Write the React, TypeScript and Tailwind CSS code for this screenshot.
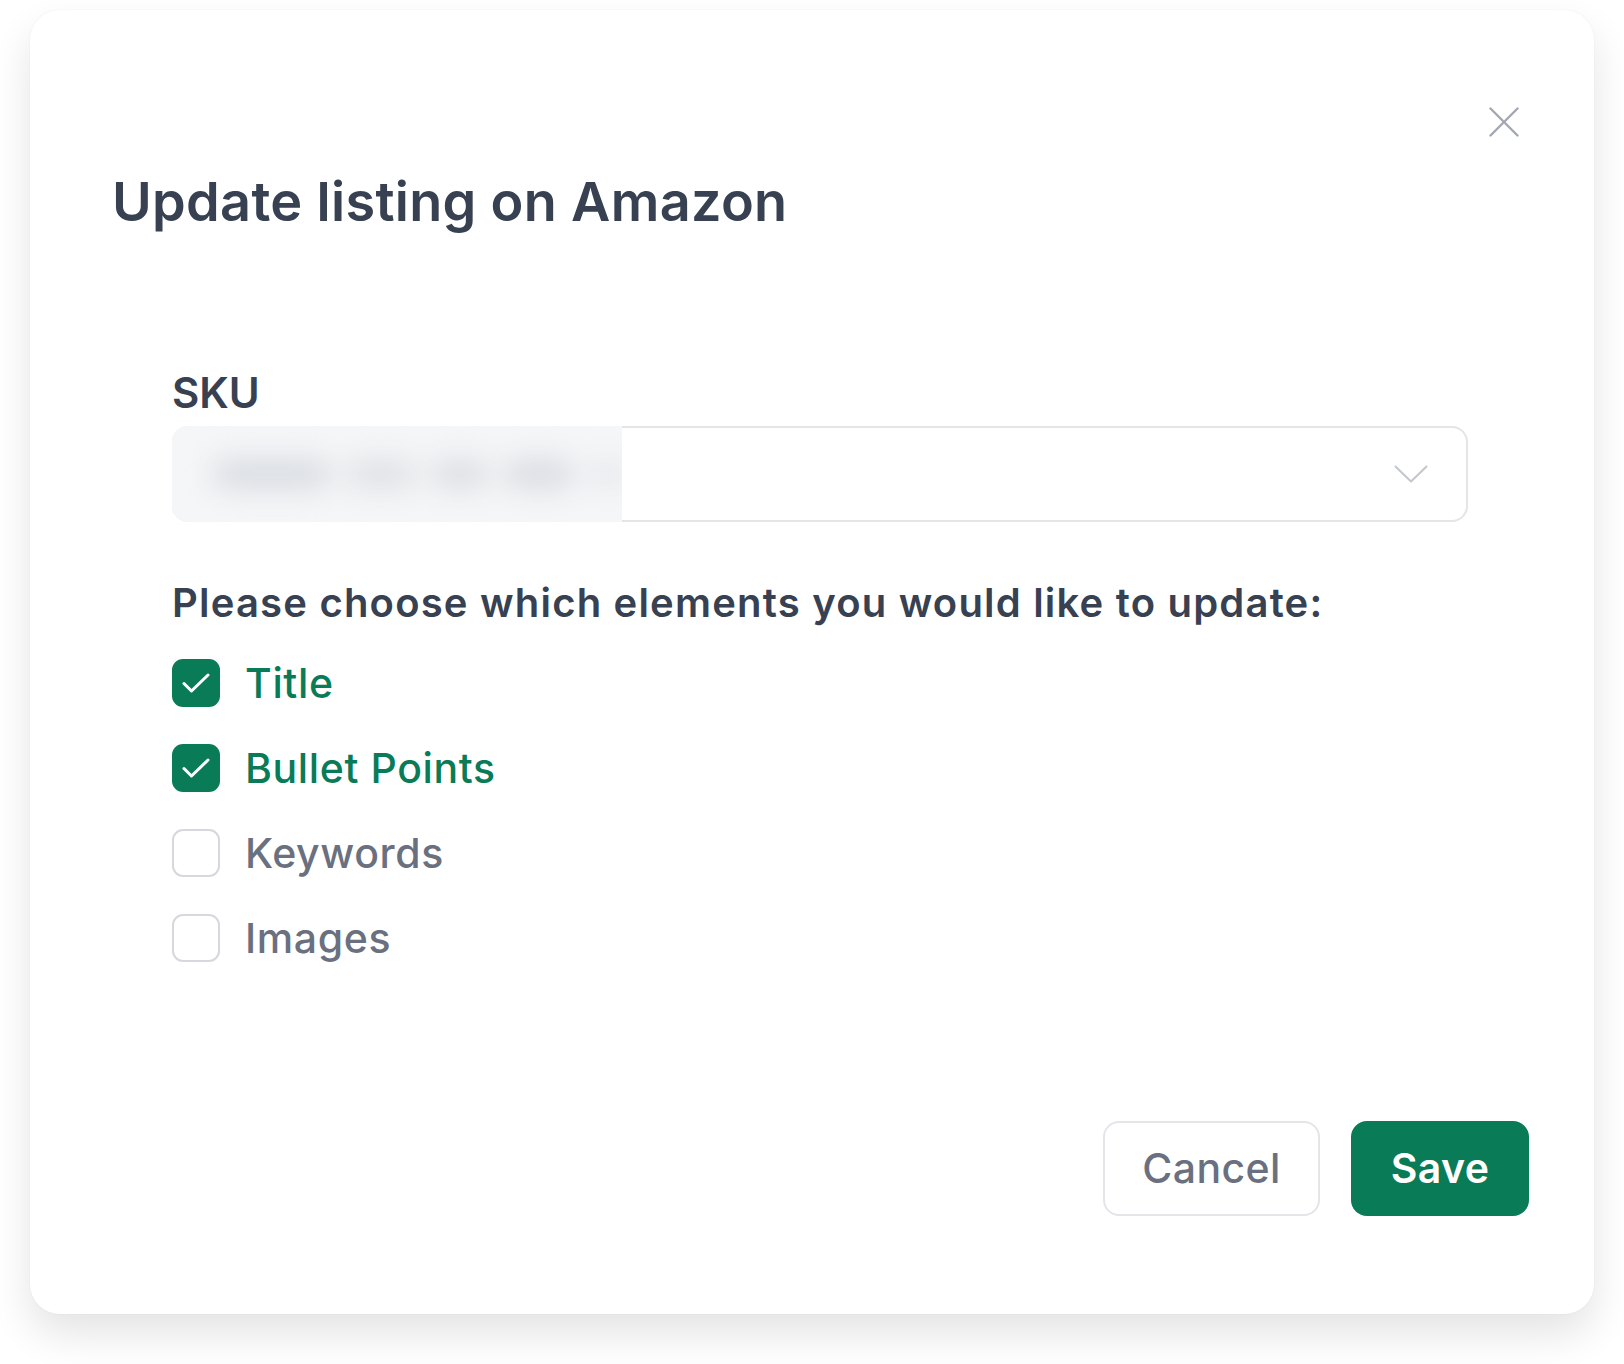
import { useState } from "react";

const GREEN = "#0a7b57";

interface Option {
  id: string;
  label: string;
}

const options: Option[] = [
  { id: "title", label: "Title" },
  { id: "bullets", label: "Bullet Points" },
  { id: "keywords", label: "Keywords" },
  { id: "images", label: "Images" },
];

function CheckRow({
  label,
  checked,
  onToggle,
}: {
  label: string;
  checked: boolean;
  onToggle: () => void;
}) {
  return (
    <button type="button" onClick={onToggle} className="flex h-[48px] items-center gap-[25px] text-left">
      {checked ? (
        <span className="flex h-[48px] w-[48px] items-center justify-center rounded-[11px] bg-[#0a7b57]">
          <svg width="28" height="20" viewBox="0 0 28 20" fill="none">
            <path d="M2 10.5 9.5 18 26 2" stroke="white" strokeWidth="3" strokeLinecap="round" strokeLinejoin="round" />
          </svg>
        </span>
      ) : (
        <span className="h-[48px] w-[48px] rounded-[11px] border-2 border-[#d6d8dd] bg-white" />
      )}
      <span
        className={`text-[41px] leading-[48px] font-medium tracking-[0.015em] ${checked ? "text-[#0a7b57]" : "text-[#6b7080]"}`}
      >
        {label}
      </span>
    </button>
  );
}

export default function App() {
  const [selected, setSelected] = useState<Record<string, boolean>>({
    title: true,
    bullets: true,
    keywords: false,
    images: false,
  });

  const toggle = (id: string) => setSelected((s) => ({ ...s, [id]: !s[id] }));

  return (
    <div className="min-h-screen bg-white pt-[10px] pl-[30px] font-['Inter','Liberation_Sans',sans-serif]">
      <div className="w-[1564px] rounded-[30px] bg-white pt-[97px] pb-[98px] pl-[82px] pr-[65px] shadow-[0_20px_40px_rgba(0,0,0,0.11),0_0_2px_rgba(0,0,0,0.06)]">
        {/* close */}
        <div className="flex h-[30px] justify-end pr-[10px]">
          <button type="button" className="h-[30px] w-[30px]">
            <svg width="30" height="30" viewBox="0 0 30 30" fill="none">
              <path d="M1.5 1.5 28.5 28.5M28.5 1.5 1.5 28.5" stroke="#a3a8b1" strokeWidth="2.4" strokeLinecap="round" />
            </svg>
          </button>
        </div>

        <h1 className="mt-[33px] text-[54px] leading-[64px] font-semibold tracking-[0.006em] text-[#374151]">
          Update listing on Amazon
        </h1>

        <div className="ml-[60px] mr-[61px]">
          <label className="mt-[135px] block text-[42px] leading-[48px] font-semibold text-[#374151]">SKU</label>

          <div className="relative mt-[9px] flex h-[96px] items-center justify-end rounded-[16px] border-2 border-[#e3e5e9] bg-white pr-[38px]">
            {/* redacted value */}
            <div className="absolute -top-[2px] -bottom-[2px] -left-[2px] flex w-[450px] items-center overflow-hidden rounded-l-[16px] bg-[#f5f6f8] pl-[40px]">
              <div className="flex items-center gap-[14px] blur-[14px]">
                <span className="h-[30px] w-[120px] rounded-full bg-[#d9dce1]" />
                <span className="h-[30px] w-[70px] rounded-full bg-[#dfe1e5]" />
                <span className="h-[30px] w-[60px] rounded-full bg-[#dcdfe3]" />
                <span className="h-[30px] w-[70px] rounded-full bg-[#d9dce1]" />
                <span className="h-[22px] w-[40px] rounded-full bg-[#e4e6ea]" />
              </div>
            </div>
            <svg width="34" height="18" viewBox="0 0 34 18" fill="none">
              <path d="M1.5 1.5 17 16.5 32.5 1.5" stroke="#c3c6cc" strokeWidth="2" strokeLinecap="round" strokeLinejoin="round" />
            </svg>
          </div>

          <p className="mt-[57px] text-[40px] leading-[48px] font-semibold tracking-[0.03em] text-[#374151]">
            Please choose which elements you would like to update:
          </p>

          <div className="mt-[32px] flex flex-col items-start gap-[37px]">
            {options.map((o) => (
              <CheckRow key={o.id} label={o.label} checked={selected[o.id]} onToggle={() => toggle(o.id)} />
            ))}
          </div>
        </div>

        <div className="mt-[159px] flex justify-end gap-[31px]">
          <button
            type="button"
            className="flex h-[95px] w-[217px] items-center justify-center rounded-[16px] border-2 border-[#e3e5e9] bg-white text-[41px] font-medium tracking-[0.01em] text-[#6b7080]"
          >
            Cancel
          </button>
          <button
            type="button"
            className="flex h-[95px] w-[178px] items-center justify-center rounded-[16px] text-[41px] font-semibold tracking-[0.01em] text-white"
            style={{ backgroundColor: GREEN }}
          >
            Save
          </button>
        </div>
      </div>
    </div>
  );
}
